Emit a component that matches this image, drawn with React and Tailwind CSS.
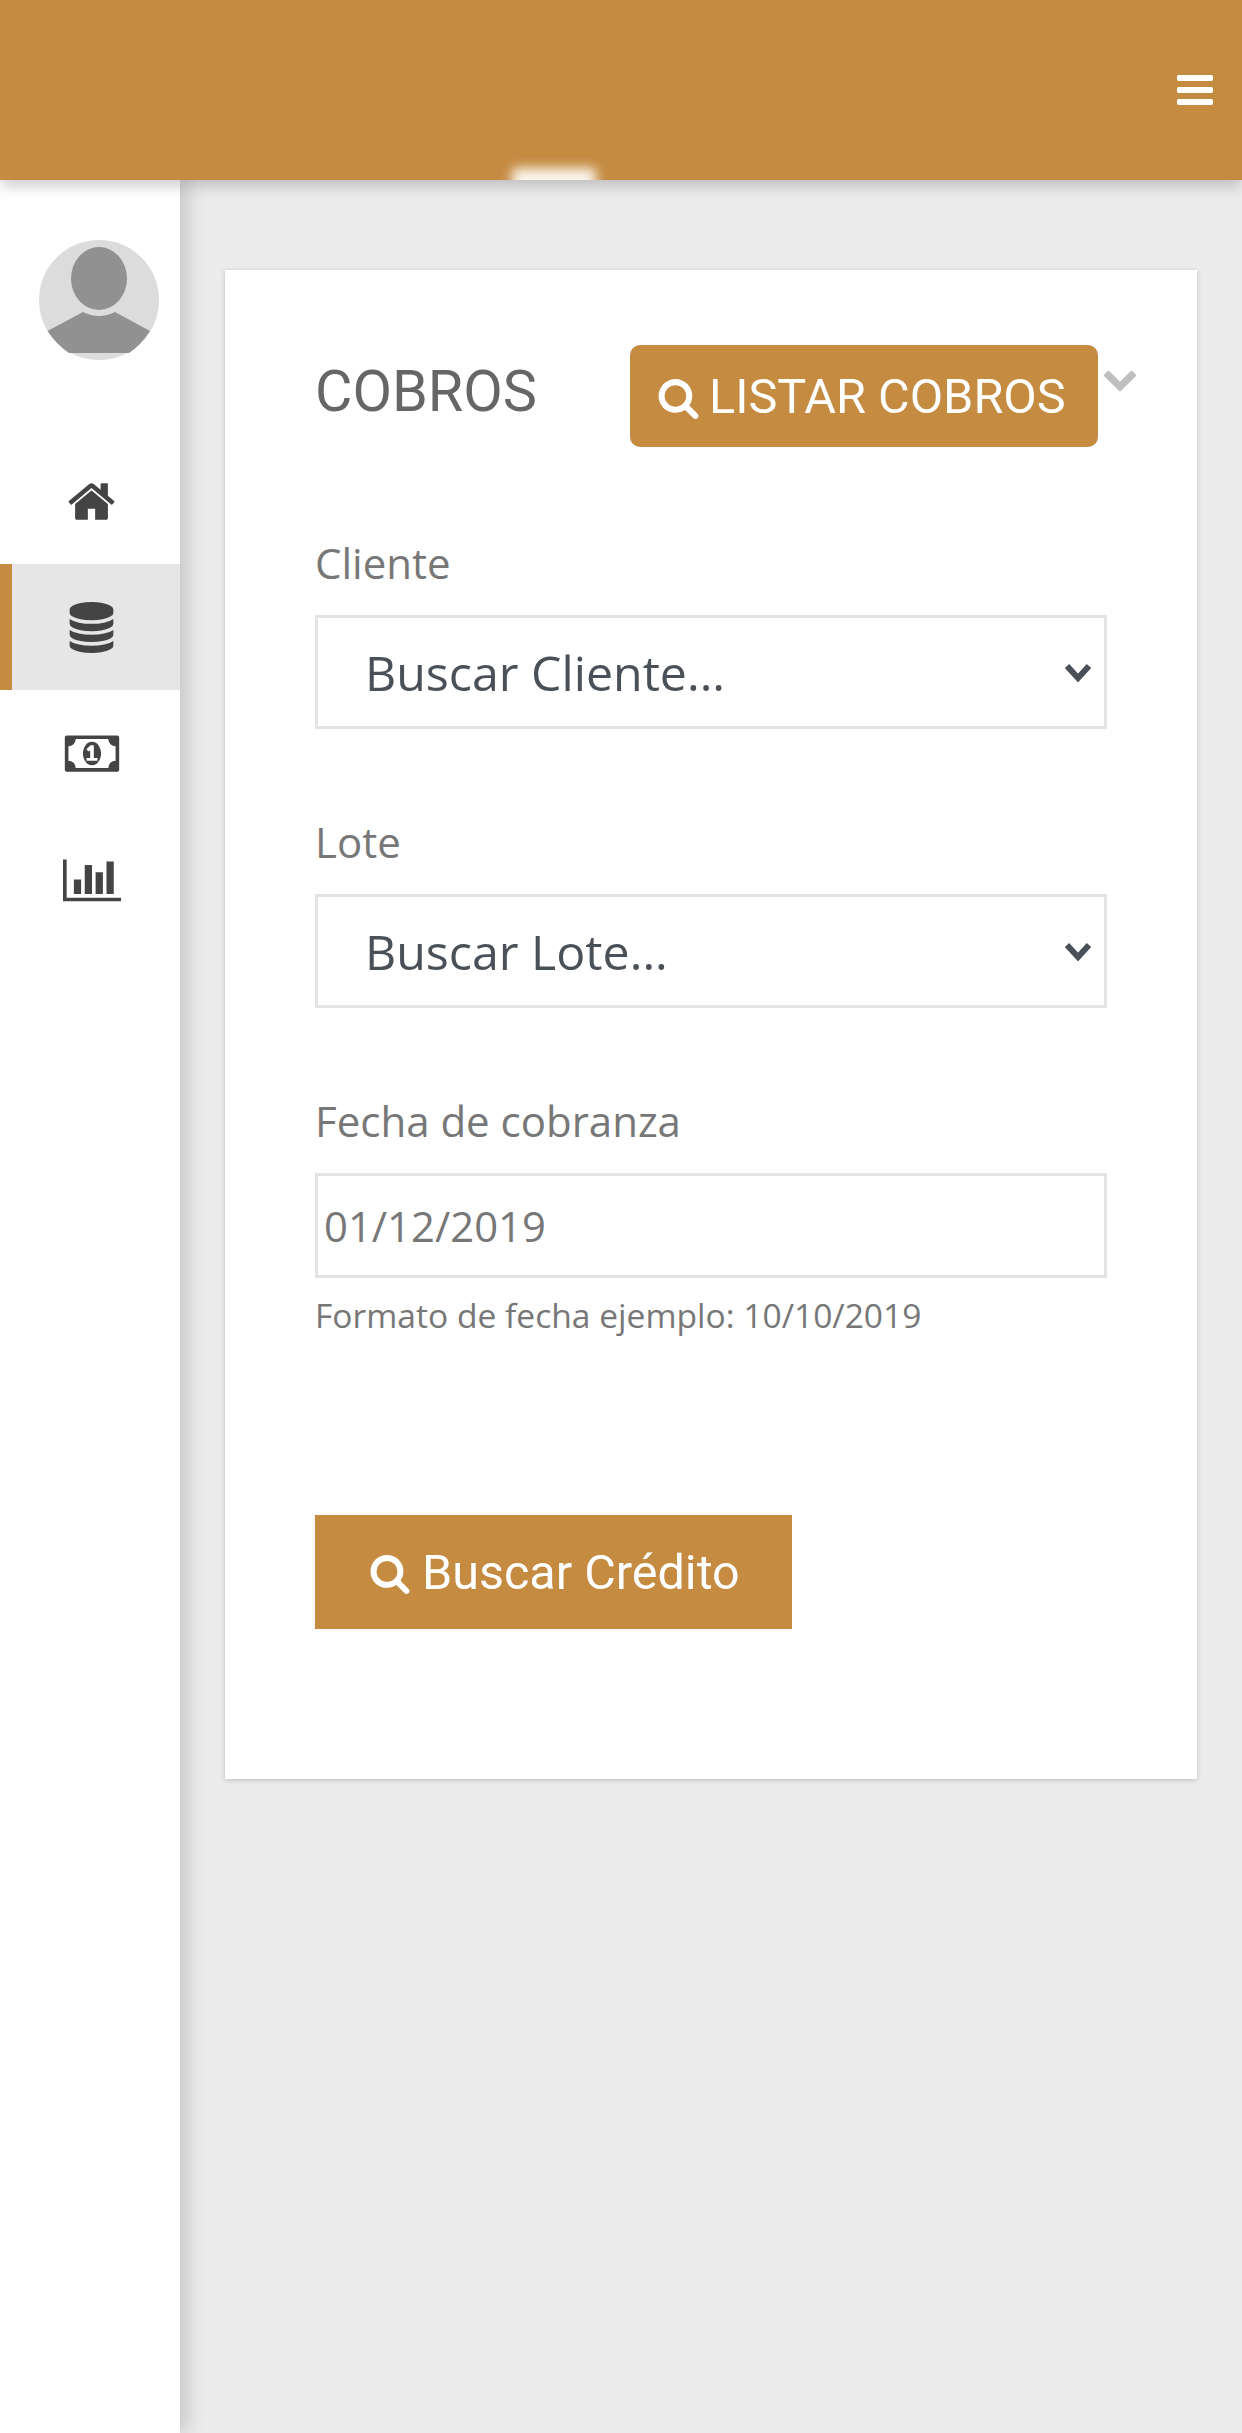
const searchPath = "M1216 832q0-185-131.5-316.5t-316.5-131.5-316.5 131.5-131.5 316.5 131.5 316.5 316.5 131.5 316.5-131.5 131.5-316.5zm512 832q0 52-38 90t-90 38q-54 0-90-38l-343-342q-179 124-399 124-143 0-273.5-55.5t-225-150-150-225-55.5-273.5 55.5-273.5 150-225 225-150 273.5-55.5 273.5 55.5 225 150 150 225 55.5 273.5q0 220-124 399l343 343q37 37 37 90z";

function SearchIcon({ className }) {
  return (
    <svg viewBox="0 0 1792 1792" className={className} fill="currentColor">
      <path d={searchPath} />
    </svg>
  );
}

const navItems = [
  {
    viewBox: "0 0 1792 1792",
    size: "w-[51px] h-[51px]",
    d: "M1472 992v480q0 26-19 45t-45 19h-384v-384h-256v384h-384q-26 0-45-19t-19-45v-480q0-1 .5-3t.5-3l575-474 575 474q1 2 1 6zm223-69l-62 74q-8 9-21 11h-3q-13 0-21-7l-692-577-692 577q-12 8-24 7-13-2-21-11l-62-74q-8-10-7-23.5t11-21.5l719-599q32-26 76-26t76 26l244 204v-195q0-14 9-23t23-9h192q14 0 23 9t9 23v408l219 182q10 8 11 21.5t-7 23.5z"
  },
  {
    viewBox: "0 0 1792 1792",
    size: "w-[51px] h-[51px]",
    active: true,
    d: "M896 768q237 0 443-43t325-127v170q0 69-103 128t-280 93.5-385 34.5-385-34.5-280-93.5-103-128v-170q119 84 325 127t443 43zm0 768q237 0 443-43t325-127v170q0 69-103 128t-280 93.5-385 34.5-385-34.5-280-93.5-103-128v-170q119 84 325 127t443 43zm0-384q237 0 443-43t325-127v170q0 69-103 128t-280 93.5-385 34.5-385-34.5-280-93.5-103-128v-170q119 84 325 127t443 43zm0-1152q208 0 385 34.5t280 93.5 103 128v128q0 69-103 128t-280 93.5-385 34.5-385-34.5-280-93.5-103-128v-128q0-69 103-128t280-93.5 385-34.5z"
  },
  {
    viewBox: "0 0 2048 1792",
    size: "w-[58px] h-[51px]",
    d: "M832 1152h384v-96h-128v-448h-114l-148 137 77 80q42-37 55-57h2v288h-128v96zm512-256q0 70-21 142t-59.5 134-101 101-138.5 39-138.5-39-101-101-59.5-134-21-142 21-142 59.5-134 101-101 138.5-39 138.5 39 101 101 59.5 134 21 142zm512 256v-512q-106 0-181-75t-75-181h-1152q0 106-75 181t-181 75v512q106 0 181 75t75 181h1152q0-106 75-181t181-75zm128-832v1152q0 26-19 45t-45 19h-1792q-26 0-45-19t-19-45v-1152q0-26 19-45t45-19h1792q26 0 45 19t19 45z"
  },
  {
    viewBox: "0 0 2048 1792",
    size: "w-[58px] h-[51px]",
    d: "M640 896v512h-256v-512h256zm384-512v1024h-256v-1024h256zm1024 1152v128h-2048v-1472h128v1344h1920zm-640-896v768h-256v-768h256zm384-384v1152h-256v-1152h256z"
  }
];

function Field({ label, children }) {
  return (
    <div className="mb-[84px]">
      <label className="block text-[42px] leading-[60px] mt-[-1px] mb-[22px] text-[#777777]">{label}</label>
      {children}
    </div>
  );
}

function SelectField({ label, placeholder }) {
  return (
    <Field label={label}>
      <div className="relative">
        <select className="block w-full h-[114px] appearance-none border-[3px] border-[#e3e3e3] bg-white pl-[47px] text-[48.3px] text-[#495057]">
          <option>{placeholder}</option>
        </select>
        {/* native arrow */}
        <svg viewBox="0 0 28 20" className="absolute right-[15px] top-[47px] w-[28px] h-[20px] text-[#495057]" fill="none" stroke="currentColor" strokeWidth="6">
          <path d="M3 4L14 16L25 4" />
        </svg>
      </div>
    </Field>
  );
}

export default function App() {
  return (
    <div className="flex flex-col w-[1242px] h-[2433px] overflow-hidden bg-[#ececec] font-['Open_Sans',sans-serif]">
      <header className="relative z-20 flex items-center justify-end shrink-0 h-[180px] pr-[26px] bg-[#c48b41] shadow-[0_6px_14px_rgba(0,0,0,0.2)]">
        {/* white smudge at the bottom edge of the bar */}
        <div className="absolute left-[494px] top-[156px] w-[120px] h-[24px] overflow-hidden">
          <div className="mx-auto mt-[12px] w-[84px] h-[30px] rounded-[4px] bg-[#fbf5ec] blur-[6px]"></div>
        </div>
        <svg viewBox="0 0 1792 1792" className="w-[42px] h-[42px] text-white" fill="currentColor">
          <path d="M1664 1344v128q0 26-19 45t-45 19h-1408q-26 0-45-19t-19-45v-128q0-26 19-45t45-19h1408q26 0 45 19t19 45zm0-512v128q0 26-19 45t-45 19h-1408q-26 0-45-19t-19-45v-128q0-26 19-45t45-19h1408q26 0 45 19t19 45zm0-512v128q0 26-19 45t-45 19h-1408q-26 0-45-19t-19-45v-128q0-26 19-45t45-19h1408q26 0 45 19t19 45z" />
        </svg>
      </header>

      <div className="flex flex-1 min-h-0">
        <aside className="relative z-10 shrink-0 w-[180px] bg-white pt-[60px] shadow-[6px_0_20px_rgba(0,0,0,0.18)]">
          <svg viewBox="0 0 120 120" className="block ml-[39px] w-[120px] h-[120px]">
            <circle cx="60" cy="60" r="60" fill="#dcdcdc" />
            <ellipse cx="60" cy="38.5" rx="28" ry="31.5" fill="#929192" />
            <path d="M8.5 91L44 72Q60 80 76 72L111 91Q102 105 90 113H30Q18 105 8.5 91Z" fill="#929192" />
          </svg>
          <nav className="mt-[78px]">
            {navItems.map((item, index) => (
              <div
                key={index}
                className={`flex items-center justify-center h-[126px] text-[#444444] ${item.active ? "bg-[#e6e6e6] border-l-[12px] border-[#c48b41] pr-[9px]" : "pl-[3px]"}`}
              >
                <svg viewBox={item.viewBox} className={item.size} fill="currentColor">
                  <path d={item.d} />
                </svg>
              </div>
            ))}
          </nav>
        </aside>

        <main className="flex-1 min-w-0 pt-[90px] pl-[45px] pr-[45px]">
          <div className="h-[1509px] bg-white pt-[75px] pl-[90px] pr-[90px] shadow-[0_1px_5px_rgba(0,0,0,0.2)]">
            <div className="flex items-start h-[102px] mb-[87px]">
              <h2 className="shrink-0 w-[315px] mt-[-4px] font-['Roboto',sans-serif] text-[57.5px] leading-[102px] text-[#666666]">COBROS</h2>
              <button className="flex items-center shrink-0 gap-[9px] w-[468px] h-[102px] pl-[27px] pt-[3px] rounded-[10px] bg-[#c48b41] text-white font-['Roboto',sans-serif] text-[48.6px]">
                <SearchIcon className="w-[43px] h-[43px]" />
                LISTAR COBROS
              </button>
              <svg viewBox="0 0 1792 1792" className="shrink-0 ml-[4px] mt-[15px] w-[36px] h-[36px] text-[#bfbfbf]" fill="currentColor">
                <path d="M1683 808l-742 741q-19 19-45 19t-45-19l-742-741q-19-19-19-45.5t19-45.5l166-165q19-19 45-19t45 19l531 531 531-531q19-19 45-19t45 19l166 165q19 19 19 45.5t-19 45.5z" />
              </svg>
            </div>

            <SelectField label="Cliente" placeholder="Buscar Cliente..." />
            <SelectField label="Lote" placeholder="Buscar Lote..." />

            <div>
              <label className="block text-[42px] leading-[60px] mt-[-1px] mb-[22px] text-[#777777]">Fecha de cobranza</label>
              <input
                type="text"
                defaultValue="01/12/2019"
                className="block w-full h-[105px] border-[3px] border-[#e3e3e3] px-[6px] text-[41.8px] text-[#777777]"
              />
              <p className="mt-[12px] text-[33.6px] leading-[50px] text-[#777777]">Formato de fecha ejemplo: 10/10/2019</p>
            </div>

            <button className="flex items-center gap-[11px] mt-[175px] w-[477px] h-[114px] pl-[54px] pt-[2px] bg-[#c48b41] text-white font-['Roboto',sans-serif] text-[48.5px]">
              <SearchIcon className="w-[42px] h-[42px]" />
              Buscar Crédito
            </button>
          </div>
        </main>
      </div>
    </div>
  );
}
